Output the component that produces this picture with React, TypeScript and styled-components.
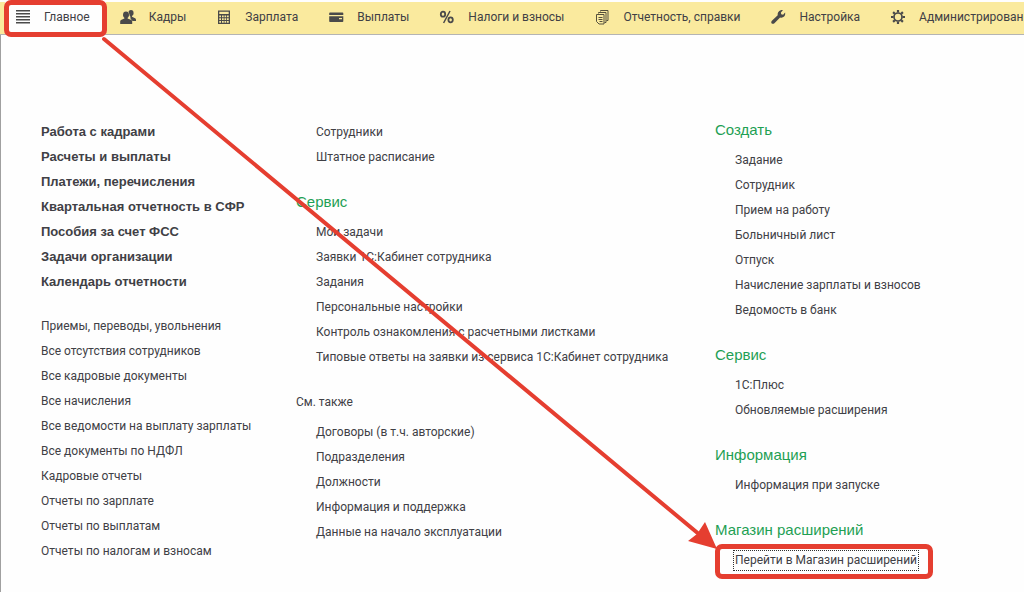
import React from 'react';
import styled, { createGlobalStyle, css } from 'styled-components';

const GlobalStyle = createGlobalStyle`
  * { box-sizing: border-box; }
  body {
    margin: 0;
    background: #fefefe;
    color: #404045;
    font-family: Roboto, 'Liberation Sans', Arial, sans-serif;
    font-size: 12px;
  }
`;

const Page = styled.div`
  position: relative;
  display: flex;
  flex-direction: column;
  min-height: 100vh;
  overflow: hidden;
`;

const NavBar = styled.nav`
  display: flex;
  height: 35px;
  padding-left: 5px;
  border-top: 2px solid #fefefe;
  border-bottom: 1px solid #b4b4b4;
  background: #faea9e;
`;

const NavButton = styled.button<{ $active?: boolean }>`
  position: relative;
  display: flex;
  flex: none;
  align-items: center;
  gap: 13px;
  padding: 0 16px 2px 14px;
  border: 0;
  background: ${(p) => (p.$active ? '#fefefe' : 'transparent')};
  color: inherit;
  font: inherit;
  white-space: nowrap;
  cursor: pointer;

  &:first-child { padding-left: 10px; }

  svg { flex: none; }
`;

const frame = css`
  content: '';
  position: absolute;
  border: 5px solid #e53e30;
  border-radius: 7px;
  pointer-events: none;
`;

const FramedNavButton = styled(NavButton)`
  &::after {
    ${frame}
    inset: -2px -1px -3px -1px;
  }
`;

const Content = styled.main`
  display: grid;
  flex: 1;
  grid-template-columns: 255px 419px 1fr;
  align-items: start;
  padding: 83px 0 16px 40px;
  border-left: 1px solid #a0a0a0;
`;

const Column = styled.div<{ $lowered?: boolean }>`
  padding-top: ${(p) => (p.$lowered ? '2px' : '0')};
`;

const Heading = styled.h2<{ $plain?: boolean; $first?: boolean }>`
  margin: ${(p) => (p.$first ? '0' : '20px')} 0 6px;
  color: ${(p) => (p.$plain ? 'inherit' : '#1fa054')};
  font-family: ${(p) => (p.$plain ? 'inherit' : "'Liberation Sans', Arial, sans-serif")};
  font-size: ${(p) => (p.$plain ? '12px' : '15px')};
  font-weight: 400;
  line-height: 24px;
`;

const Item = styled.li`
  display: flex;
  align-items: center;
  height: 25px;
  white-space: nowrap;
`;

const List = styled.ul<{ $indent?: boolean; $bold?: boolean }>`
  margin: 0;
  padding: 0 0 0 ${(p) => (p.$indent ? '20px' : '0')};
  list-style: none;

  ${(p) =>
    p.$bold &&
    css`
      font-family: 'Liberation Sans', Arial, sans-serif;
      font-size: 13px;
      font-weight: 700;

      ${Item} { padding-bottom: 2px; }
    `}

  & + & { margin-top: 19px; }
`;

const ItemLink = styled.a<{ $framed?: boolean }>`
  position: relative;
  color: inherit;
  line-height: 17px;
  text-decoration: none;

  ${(p) =>
    p.$framed &&
    css`
      outline: 1px dotted #303030;
      outline-offset: 1px;
      &::after {
        ${frame}
        inset: -8px -16px -10px -20px;
      }
    `}
`;

const ArrowLayer = styled.svg`
  position: absolute;
  top: 0;
  left: 0;
  pointer-events: none;
`;

const Icon = ({ children }: { children: React.ReactNode }) => (
  <svg width="16" height="16" viewBox="0 0 16 16" fill="#4a4a4a" aria-hidden="true">
    {children}
  </svg>
);

const MenuIcon = () => (
  <Icon>
    <path d="M1 1h14v1.600H1zM1 4h14v1.600H1zM1 7h14v1.600H1zM1 10h14v1.600H1zM1 13h14v1.600H1z" />
  </Icon>
);

const PeopleIcon = () => (
  <Icon>
    <ellipse cx="11" cy="4" rx="2.600" ry="3" />
    <path d="M10 6h2v1.800l2.600 1.100c.9.4 1.400 1 1.400 2V12h-5z" />
    <g stroke="#faea9e" strokeWidth="1" paintOrder="stroke">
      <path d="M4.400 8h3.200v1.500l3.200 1.200c.9.4 1.400 1 1.400 2V15H.2v-2.300c0-1 .5-1.600 1.400-2l2.800-1.200z" />
      <ellipse cx="6" cy="5.800" rx="3" ry="3.400" />
    </g>
    <path d="M4.700 7.500h2.600v3H4.700z" />
  </Icon>
);

const CalculatorIcon = () => (
  <Icon>
    <path
      fillRule="evenodd"
      d="M2 1.500h12V15H2zM3.300 2.800v2.200h9.400V2.800zM3.300 6.500v1.700h1.700V6.500zM6 6.500v1.700h1.700V6.500zM8.500 6.500v1.700h1.700V6.500zM11 6.500v1.700h1.700V6.500zM3.300 9.200v1.700h1.700V9.200zM6 9.200v1.700h1.700V9.200zM8.500 9.200v1.700h1.700V9.200zM11 9.200v1.700h1.700V9.200zM3.300 12v1.700h1.700V12zM6 12v1.700h1.700V12zM8.500 12v1.700h1.700V12zM11 12v1.700h1.700V12z"
    />
  </Icon>
);

const CardIcon = () => (
  <Icon>
    <path d="M2 3.500h12.500q.8 0 .8.8V6H1.200V4.300q0-.8.8-.8z" />
    <path fillRule="evenodd" d="M1.200 7.200h14.100v5q0 .8-.8.8H2q-.8 0-.8-.8zM11 9v1.300h3V9z" />
  </Icon>
);

const PercentIcon = () => (
  <Icon>
    <g fill="none" stroke="#4a4a4a" strokeWidth="1.800">
      <ellipse cx="4" cy="5.200" rx="2.200" ry="2.500" />
      <ellipse cx="11.600" cy="10.800" rx="2.200" ry="2.500" />
      <path d="M11 2L4.600 14" strokeWidth="1.500" />
    </g>
  </Icon>
);

const ReportsIcon = () => (
  <Icon>
    <g fill="none" stroke="#55503c" strokeWidth="1">
      <path d="M6.500 2.500v-1h7.500v10h-1.500" />
      <path d="M4.500 4.500v-1h7.500v10h-1.500" />
      <path d="M2.500 5.500h7.500v9.500H5l-2.500-2.500z" />
      <path d="M4.500 8.500h4M4.500 10.500h4M5.500 12.500h3" />
    </g>
  </Icon>
);

const WrenchIcon = () => (
  <Icon>
    <path d="M10.700 1.200c.8-.2 1.500-.2 2.200 0l-2 2.300.3 1.800 1.900.4 2-2.100c.3 1.600 0 3-1 4-1.100 1.100-2.600 1.400-4 .9L4.400 14.200c-.8.8-1.900.8-2.700.2-.7-.8-.6-1.900.2-2.700l5.800-5.400C7.200 4 8.500 1.800 10.700 1.200z" />
  </Icon>
);

const GearIcon = () => (
  <Icon>
    <circle cx="8" cy="8" r="4" fill="none" stroke="#4a4a4a" strokeWidth="1.700" />
    <g stroke="#4a4a4a" strokeWidth="2.200">
      <path d="M8 1v2.500M8 12.500V15M1 8h2.500M12.500 8H15M3.100 3.100l1.700 1.700M11.200 11.200l1.700 1.700M3.100 12.900l1.700-1.700M11.200 4.800l1.700-1.700" />
    </g>
  </Icon>
);

const sections = [
  { label: 'Кадры', icon: <PeopleIcon /> },
  { label: 'Зарплата', icon: <CalculatorIcon /> },
  { label: 'Выплаты', icon: <CardIcon /> },
  { label: 'Налоги и взносы', icon: <PercentIcon /> },
  { label: 'Отчетность, справки', icon: <ReportsIcon /> },
  { label: 'Настройка', icon: <WrenchIcon /> },
  { label: 'Администрирование', icon: <GearIcon /> },
];

const mainLinks = [
  'Работа с кадрами',
  'Расчеты и выплаты',
  'Платежи, перечисления',
  'Квартальная отчетность в СФР',
  'Пособия за счет ФСС',
  'Задачи организации',
  'Календарь отчетности',
];

const journalLinks = [
  'Приемы, переводы, увольнения',
  'Все отсутствия сотрудников',
  'Все кадровые документы',
  'Все начисления',
  'Все ведомости на выплату зарплаты',
  'Все документы по НДФЛ',
  'Кадровые отчеты',
  'Отчеты по зарплате',
  'Отчеты по выплатам',
  'Отчеты по налогам и взносам',
];

const serviceLinks = [
  'Мои задачи',
  'Заявки 1С:Кабинет сотрудника',
  'Задания',
  'Персональные настройки',
  'Контроль ознакомления с расчетными листками',
  'Типовые ответы на заявки из сервиса 1С:Кабинет сотрудника',
];

const seeAlsoLinks = [
  'Договоры (в т.ч. авторские)',
  'Подразделения',
  'Должности',
  'Информация и поддержка',
  'Данные на начало эксплуатации',
];

const createLinks = [
  'Задание',
  'Сотрудник',
  'Прием на работу',
  'Больничный лист',
  'Отпуск',
  'Начисление зарплаты и взносов',
  'Ведомость в банк',
];

type LinksProps = { items: string[]; indent?: boolean; bold?: boolean; framed?: boolean };

const Links = ({ items, indent, bold, framed }: LinksProps) => (
  <List $indent={indent} $bold={bold}>
    {items.map((item) => (
      <Item key={item}>
        <ItemLink href="#" $framed={framed}>
          {item}
        </ItemLink>
      </Item>
    ))}
  </List>
);

export default function App() {
  return (
    <Page>
      <GlobalStyle />
      <NavBar>
        <FramedNavButton $active>
          <MenuIcon />
          Главное
        </FramedNavButton>
        {sections.map((s) => (
          <NavButton key={s.label}>
            {s.icon}
            {s.label}
          </NavButton>
        ))}
      </NavBar>
      <Content>
        <Column $lowered>
          <Links items={mainLinks} bold />
          <Links items={journalLinks} />
        </Column>
        <Column $lowered>
          <Links items={['Сотрудники', 'Штатное расписание']} indent />
          <Heading>Сервис</Heading>
          <Links items={serviceLinks} indent />
          <Heading $plain>См. также</Heading>
          <Links items={seeAlsoLinks} indent />
        </Column>
        <Column>
          <Heading $first>Создать</Heading>
          <Links items={createLinks} indent />
          <Heading>Сервис</Heading>
          <Links items={['1С:Плюс', 'Обновляемые расширения']} indent />
          <Heading>Информация</Heading>
          <Links items={['Информация при запуске']} indent />
          <Heading>Магазин расширений</Heading>
          <Links items={['Перейти в Магазин расширений']} indent framed />
        </Column>
      </Content>
      <ArrowLayer width="1024" height="592" viewBox="0 0 1024 592" aria-hidden="true">
        <path d="M104 39L700 535" stroke="#e53e30" strokeWidth="4" strokeLinecap="round" />
        <path d="M717 549L688 541L697 534L705 522Z" fill="#e53e30" />
      </ArrowLayer>
    </Page>
  );
}
